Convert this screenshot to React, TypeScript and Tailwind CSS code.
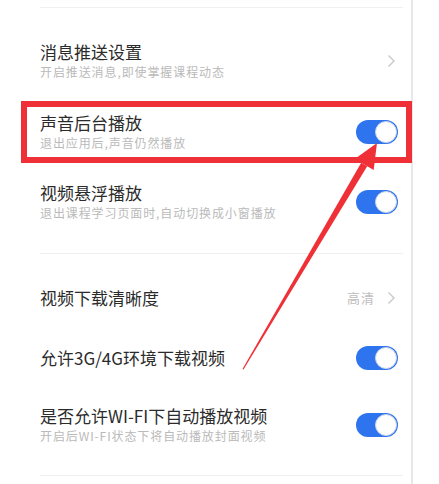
import React from "react";

type Row = {
  title: string;
  sub?: string;
  control: "toggle" | "chevron" | "value";
  value?: string;
  mt: string;
};

const font = { fontFamily: '"Noto Sans CJK SC", "Noto Sans", sans-serif' };

function Toggle() {
  return (
    <div className="relative h-[24px] w-[42px] shrink-0 rounded-full bg-[#2f74ef]">
      <div className="absolute right-[1px] top-[1px] h-[22px] w-[22px] rounded-full border border-[#c9d3e3] bg-white" />
    </div>
  );
}

function Chevron() {
  return (
    <svg width="9" height="14" viewBox="0 0 9 14" className="shrink-0">
      <path d="M1.5 1.5 L7 7 L1.5 12.5" fill="none" stroke="#c8c8c8" strokeWidth="1.4" />
    </svg>
  );
}

function Divider({ mt }: { mt: string }) {
  return <div className={`ml-[40px] mr-[8px] h-px bg-[#f0f0f0] ${mt}`} />;
}

function SettingRow({ row }: { row: Row }) {
  return (
    <div className={`flex items-center justify-between pl-[40px] pr-[13px] ${row.mt}`}>
      <div className="flex flex-col">
        <span className="text-[17px] leading-[20px] text-[#2b2b2b]">{row.title}</span>
        {row.sub && (
          <span className="mt-[2px] text-[12px] leading-[15px] tracking-[0.9px] text-[#bababa]">
            {row.sub}
          </span>
        )}
      </div>
      {row.control === "toggle" && <Toggle />}
      {row.control === "chevron" && (
        <div className="pr-[2px]">
          <Chevron />
        </div>
      )}
      {row.control === "value" && (
        <div className="flex items-center gap-[12px] pr-[2px]">
          <span className="text-[13px] leading-[16px] tracking-[1px] text-[#bdbdbd]">{row.value}</span>
          <Chevron />
        </div>
      )}
    </div>
  );
}

const topRows: Row[] = [
  { title: "消息推送设置", sub: "开启推送消息,即使掌握课程动态", control: "chevron", mt: "mt-[34px]" },
  { title: "声音后台播放", sub: "退出应用后,声音仍然播放", control: "toggle", mt: "mt-[34px]" },
  { title: "视频悬浮播放", sub: "退出课程学习页面时,自动切换成小窗播放", control: "toggle", mt: "mt-[33px]" },
];

const bottomRows: Row[] = [
  { title: "视频下载清晰度", control: "value", value: "高清", mt: "mt-[34px]" },
  { title: "允许3G/4G环境下载视频", control: "toggle", mt: "mt-[38px]" },
  { title: "是否允许WI-FI下自动播放视频", sub: "开启后WI-FI状态下将自动播放封面视频", control: "toggle", mt: "mt-[36px]" },
];

export default function App() {
  return (
    <div className="relative h-[484px] w-[439px] overflow-hidden bg-white" style={font}>
      <div className="h-full w-[413px] border-r-2 border-[#e8e8e8] pt-[7px]">
        <Divider mt="mt-0" />
        {topRows.map((r) => (
          <SettingRow key={r.title} row={r} />
        ))}
        <Divider mt="mt-[33px]" />
        {bottomRows.map((r) => (
          <SettingRow key={r.title} row={r} />
        ))}
        <Divider mt="mt-[32px]" />
      </div>

      {/* annotation box */}
      <div className="pointer-events-none absolute left-[21px] top-[101px] h-[62px] w-[391px] border-[6px] border-[#ef3036]" />

      {/* annotation arrow */}
      <svg className="pointer-events-none absolute inset-0" width="439" height="484" viewBox="0 0 439 484">
        <polygon
          points="243.5,369.5 242.5,368.9 361.2,162.7 367.2,166.3"
          fill="#ef3036"
        />
        <polygon points="377,143 354.7,158.9 373.7,170.1" fill="#ef3036" />
      </svg>
    </div>
  );
}
